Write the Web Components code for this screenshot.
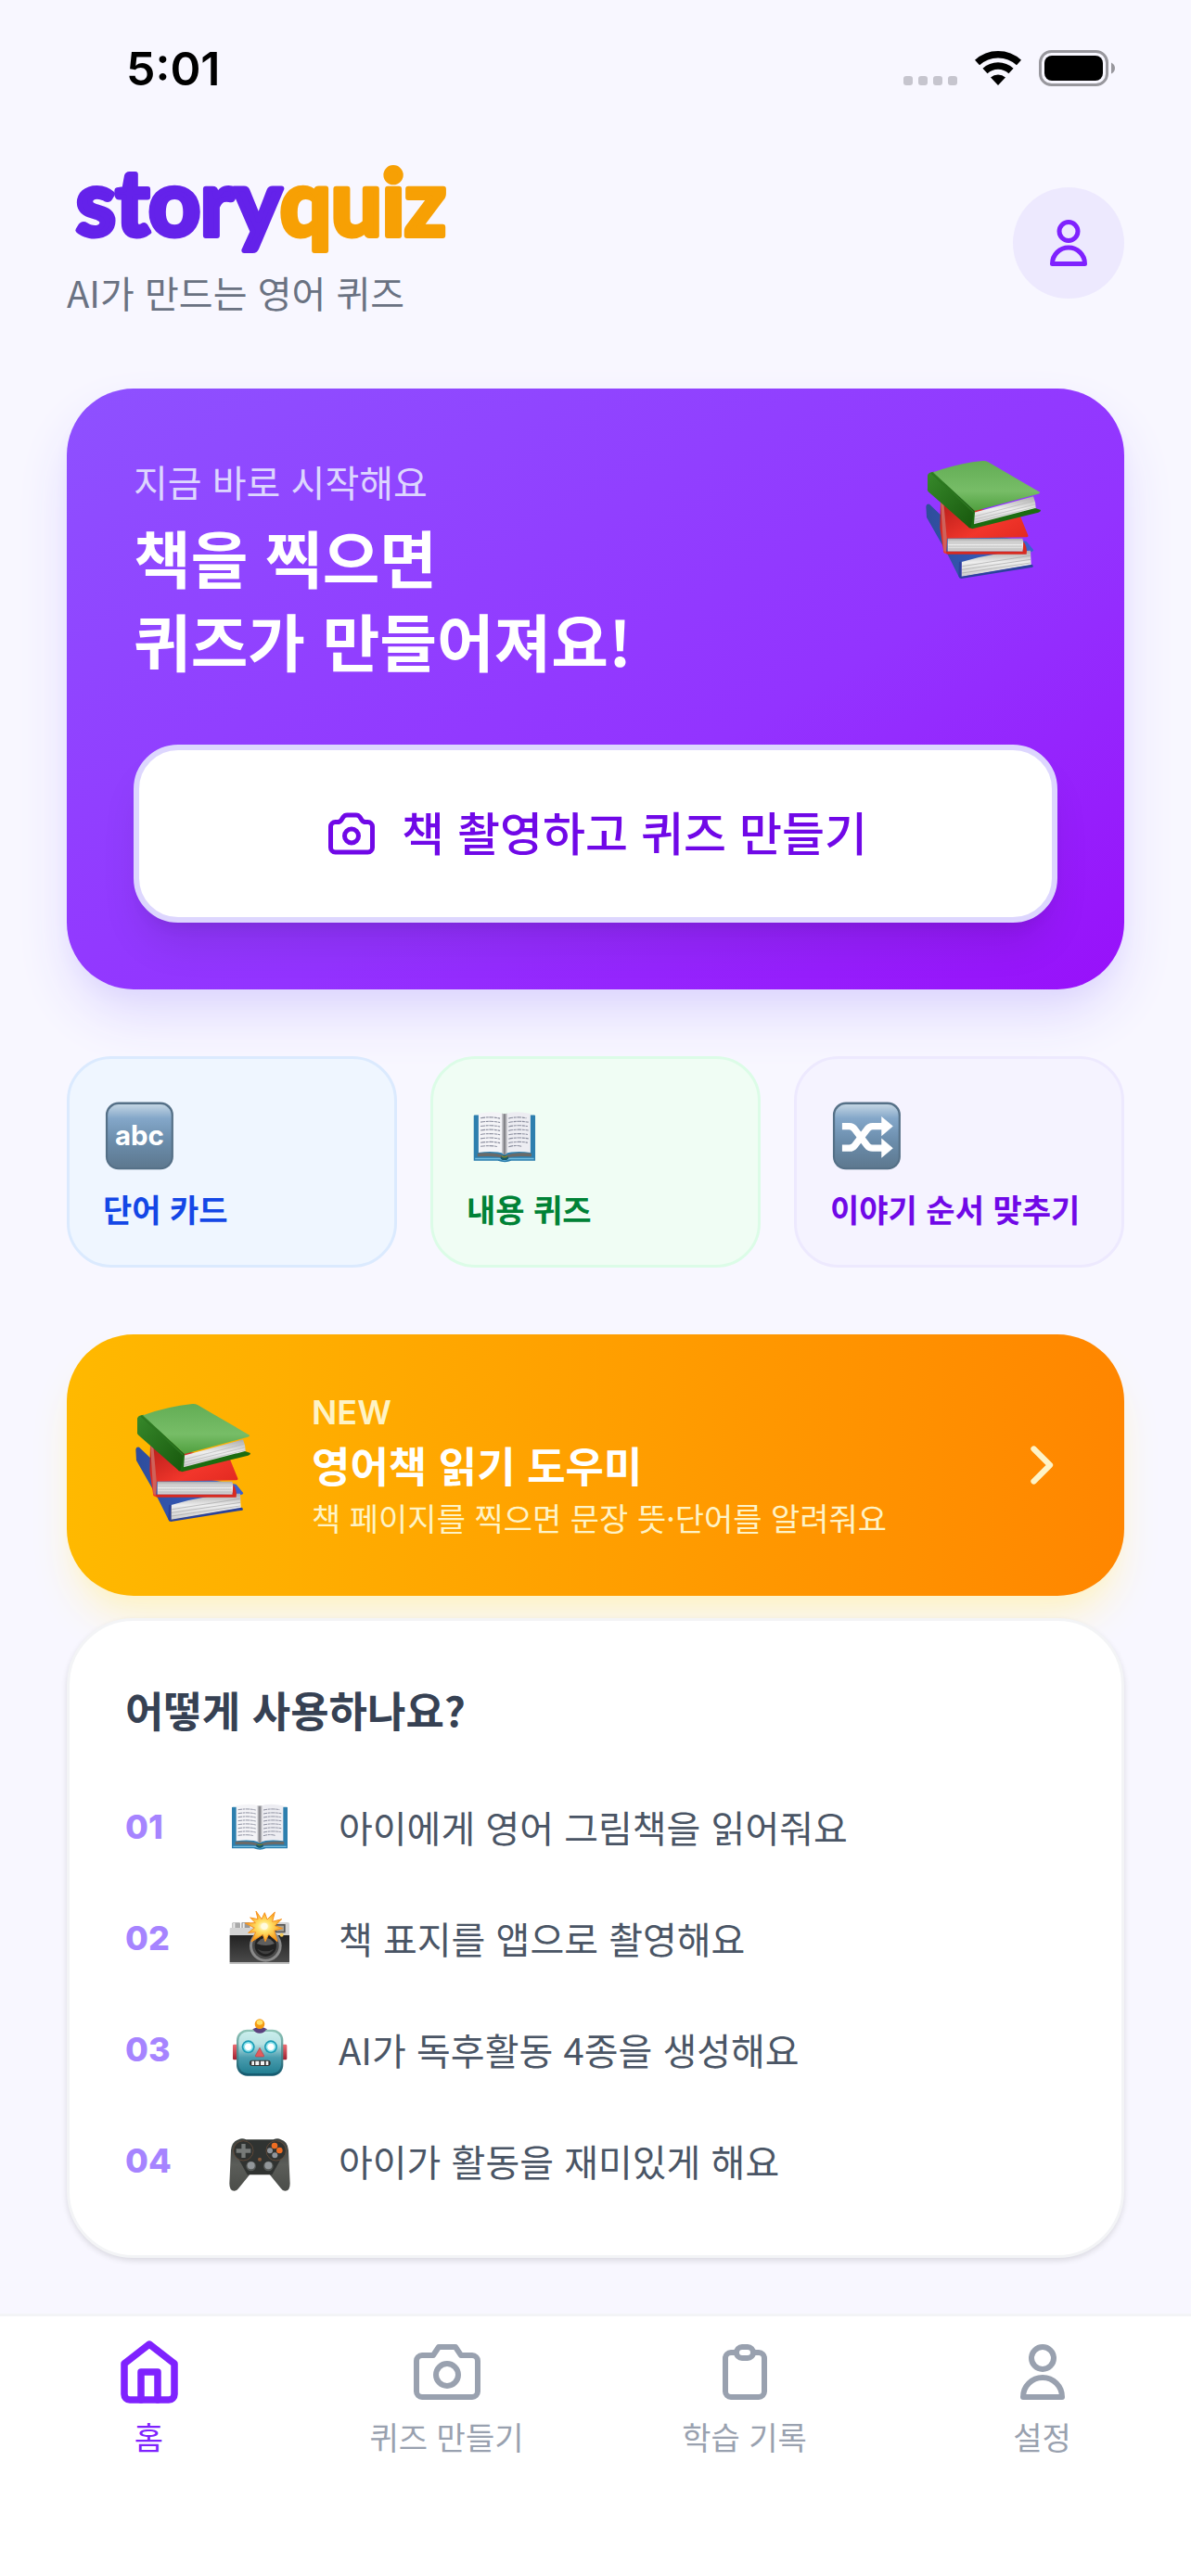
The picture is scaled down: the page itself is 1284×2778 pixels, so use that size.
<!DOCTYPE html>
<html lang="ko">
<head>
<meta charset="utf-8">
<meta name="viewport" content="width=device-width, initial-scale=1">
<title>storyquiz</title>
<style>
  html, body {
    margin: 0;
  }

  body {
    background: #f8f7ff;
    font-family: "Noto Sans CJK KR", "Noto Sans", sans-serif;
    color: #364153;
  }
</style>
</head>
<body>
<story-app>
  <status-bar slot="top" time="5:01"></status-bar>
  <app-header slot="top" tagline="AI가 만드는 영어 퀴즈"></app-header>

  <hero-card>
    <span slot="label">지금 바로 시작해요</span>
    <span slot="title">책을 찍으면<br>퀴즈가 만들어져요!</span>
    <span slot="action">책 촬영하고 퀴즈 만들기</span>
  </hero-card>

  <chip-row>
    <activity-chip tone="blue" emoji="abc">단어 카드</activity-chip>
    <activity-chip tone="green" emoji="book">내용 퀴즈</activity-chip>
    <activity-chip tone="violet" emoji="shuffle">이야기 순서 맞추기</activity-chip>
  </chip-row>

  <helper-banner>
    <span slot="badge">NEW</span>
    <span slot="title">영어책 읽기 도우미</span>
    <span slot="text">책 페이지를 찍으면 문장 뜻·단어를 알려줘요</span>
  </helper-banner>

  <how-to-card>
    <span slot="title">어떻게 사용하나요?</span>
    <how-to-step number="01" emoji="book">아이에게 영어 그림책을 읽어줘요</how-to-step>
    <how-to-step number="02" emoji="camera">책 표지를 앱으로 촬영해요</how-to-step>
    <how-to-step number="03" emoji="robot">AI가 독후활동 4종을 생성해요</how-to-step>
    <how-to-step number="04" emoji="gamepad">아이가 활동을 재미있게 해요</how-to-step>
  </how-to-card>

  <tab-bar slot="bottom">
    <tab-item icon="home" href="#home" active>홈</tab-item>
    <tab-item icon="camera" href="#create">퀴즈 만들기</tab-item>
    <tab-item icon="clipboard" href="#history">학습 기록</tab-item>
    <tab-item icon="user" href="#settings">설정</tab-item>
  </tab-bar>
</story-app>

<script>
const ICONS = {
  home: '<path d="M3 9l9-7 9 7v11a2 2 0 0 1-2 2H5a2 2 0 0 1-2-2z"/><path d="M9 22V12h6v10"/>',
  camera: '<path d="M23 19a2 2 0 0 1-2 2H3a2 2 0 0 1-2-2V8a2 2 0 0 1 2-2h4l2-3h6l2 3h4a2 2 0 0 1 2 2z"/><circle cx="12" cy="13" r="4"/>',
  photo: '<path d="M3 9a2 2 0 012-2h.93a2 2 0 001.664-.89l.812-1.22A2 2 0 0110.07 4h3.86a2 2 0 011.664.89l.812 1.22A2 2 0 0018.07 7H19a2 2 0 012 2v9a2 2 0 01-2 2H5a2 2 0 01-2-2V9z"/><circle cx="12" cy="13" r="3"/>',
  clipboard: '<path d="M9 5H7a2 2 0 00-2 2v12a2 2 0 002 2h10a2 2 0 002-2V7a2 2 0 00-2-2h-2M9 5a2 2 0 002 2h2a2 2 0 002-2M9 5a2 2 0 012-2h2a2 2 0 012 2"/>',
  user: '<circle cx="12" cy="7" r="4"/><path d="M12 14a7 7 0 00-7 7h14a7 7 0 00-7-7z"/>',
  chevron: '<path d="M9 5l7 7-7 7"/>'
};

// Shared gradient for the blue-grey square emoji
const TILE = `
  <defs>
    <linearGradient id="tile" x2="0" y2="1">
      <stop offset="0" stop-color="#c3d5e3"/><stop offset=".22" stop-color="#84a7c9"/>
      <stop offset=".55" stop-color="#6d8fae"/><stop offset="1" stop-color="#5d788f"/>
    </linearGradient>
  </defs>
  <rect x="8" y="12" width="198" height="198" rx="38" fill="#557087"/>
  <rect x="14" y="19" width="186" height="185" rx="32" fill="url(#tile)"/>`;

const EMOJI = {
  books: {
    box: '168 93 432 432',
    art: `
      <defs>
        <linearGradient id="page" x2="0" y2="1"><stop offset="0" stop-color="#aaa"/><stop offset=".45" stop-color="#eee"/><stop offset="1" stop-color="#ccc"/></linearGradient>
        <linearGradient id="green" x2="0" y2="1"><stop offset="0" stop-color="#63ad55"/><stop offset=".6" stop-color="#77bd67"/><stop offset="1" stop-color="#4f9f3e"/></linearGradient>
        <linearGradient id="spine" x2="1" y2="1"><stop offset="0" stop-color="#37892b"/><stop offset="1" stop-color="#17570c"/></linearGradient>
        <linearGradient id="red" x2="1" y2="1"><stop offset="0" stop-color="#b51d1a"/><stop offset=".5" stop-color="#f2362b"/><stop offset="1" stop-color="#dc241c"/></linearGradient>
        <linearGradient id="blue" x2="1" y2="0"><stop offset="0" stop-color="#2e4d9b"/><stop offset="1" stop-color="#3b62cf"/></linearGradient>
      </defs>
      <path d="M175 258q2-9 11-7l84 80 230 40 22 27q2 3-3 6L290 440l-6 52-40-80-67-118z" fill="url(#blue)"/>
      <path d="M290 438q110-34 223-37l2 47-226 38z" fill="url(#page)"/>
      <path d="M292 452l220-34M291 463l222-33M291 474l222-33" stroke="#a5a5a5" stroke-width="2" fill="none"/>
      <path d="M282 437l8 1v47l228-39q6 4 2 9L288 492q-6-2-8-9z" fill="#2a429b"/>
      <path d="M222 244l258 46 25 62q2 5-4 6l-258 4-3 50-8-4-12-80z" fill="url(#red)"/>
      <path d="M222 244l10 2 10 114-2 50-8-10z" fill="#cf625a"/>
      <path d="M245 362h242q7 20 0 42H245z" fill="url(#page)"/>
      <path d="M247 378h238M247 387h238M247 396h238" stroke="#aaa" stroke-width="2"/>
      <path d="M238 404h250l2-32q14 18 10 41H242z" fill="#d82a20"/>
      <path d="M180 158q2-10 20-12l133 126-12 56q-6 2-10-4L184 212q-6-4-4-10z" fill="url(#spine)"/>
      <path d="M198 148q80-29 160-37 10-1 18 4l167 97q2 4-6 6L333 273z" fill="url(#green)"/>
      <path d="M192 150l136 126" stroke="#2c7620" stroke-width="4" fill="none"/>
      <path d="M330 278l192-52q8 18 8 40l-202 52z" fill="url(#page)"/>
      <path d="M331 291l193-50M330 301l198-49M330 310l200-50" stroke="#b5b5b5" stroke-width="2" fill="none"/>
      <path d="M330 274l3 4-3 38 198-52 18 6q0 6-8 8l-214 53q-6-2-4-8z" fill="#1b6c10"/>`
  },
  book: {
    box: '69 0 228 228',
    art: `
      <path d="M90 52q0-2 3-2h174q3 0 3 2v132h-70q-18 8-40 0H90z" fill="#2d7fae"/>
      <path d="M94 176h72q14 12 28 0h72v4h-72q-14 8-28 0H94z" fill="#75bddf"/>
      <path d="M101 162q52-4 79 8 27-12 79-8v10q-50-4-72 4h-14q-22-8-72-4z" fill="#6a6a68"/>
      <path d="M104 46q48-10 76 2v116q-28-10-76-4z" fill="#f4f4f7"/>
      <path d="M256 46q-48-10-76 2v116q28-10 76-4z" fill="#ededf2"/>
      <path d="M173 45l7 3 7-3v118l-7 4-7-4z" fill="#b0b0b4"/>
      <path d="M180 46v120" stroke="#66666c" stroke-width="3"/>
      <path d="M110 59q32-5 57 1M110 71q32-5 57 1M110 83q32-5 57 1M110 95q32-5 57 1M110 107q32-5 57 1M110 119q32-5 57 1M110 131q32-5 57 1M110 142q32-4 50 1M192 60q26-6 52-1M192 72q26-6 58-1M192 84q26-6 56-1M192 96q26-6 58-1M192 108q26-6 56-1M192 120q26-6 58-1M192 132q26-6 56-1M192 143q20-6 38-1" stroke="#8b8e9e" stroke-width="3" stroke-dasharray="13 2 8 2" fill="none"/>
      <ellipse cx="180" cy="175" rx="11" ry="7" fill="#175a6b"/>
      <path d="M172 170q8 6 16 0" stroke="#85862f" stroke-width="4" fill="none"/>`
  },
  camera: {
    box: '69 0 228 228',
    art: `
      <defs>
        <linearGradient id="body" x2="0" y2="1"><stop offset="0" stop-color="#222"/><stop offset="1" stop-color="#4a4a4a"/></linearGradient>
        <radialGradient id="flash"><stop offset="0" stop-color="#fff"/><stop offset=".35" stop-color="#ffe36b"/><stop offset="1" stop-color="#f99a18"/></radialGradient>
      </defs>
      <rect x="91" y="64" width="26" height="24" rx="3" fill="#aaa"/>
      <rect x="121" y="63" width="28" height="24" rx="3" fill="#999"/>
      <path d="M97 65v16M128 65v16" stroke="#eee" stroke-width="6"/>
      <path d="M83 84q0-3 4-3h66V66q0-3 4-3h114q5 0 5 5v130H83z" fill="#d4d4d4"/>
      <path d="M83 105h193v87H83z" fill="url(#body)"/>
      <path d="M83 192h193v6H83z" fill="#bdbdbd"/>
      <rect x="229" y="69" width="34" height="28" fill="#555"/>
      <rect x="234" y="74" width="24" height="18" fill="#a7a295"/>
      <circle cx="199" cy="139" r="52" fill="#8a8a8a"/>
      <circle cx="199" cy="139" r="43" fill="#4a4a4a"/>
      <circle cx="199" cy="139" r="35" fill="#222"/>
      <path d="M170 132q29-38 58 0-29 12-58 0z" fill="#5e5e5e"/>
      <path d="M172 149q27 16 54 0-27 34-54 0z" fill="#404040"/>
      <circle cx="251" cy="104" r="6" fill="#f5ca57"/>
      <path d="M168 27l18 26 10-21 8 22 25-24-8 31 30-8-22 21 25 9-27 7 10 35-28-23-11 23-8-22-37 23 14-31-24 2 20-16-30-15 33-1-17-17 25 5z" fill="url(#flash)" stroke="#f7931e" stroke-width="3"/>
      <circle cx="195" cy="76" r="11" fill="#fffbe0"/>`
  },
  robot: {
    box: '69 0 228 228',
    art: `
      <defs>
        <linearGradient id="face" x2="0" y2="1"><stop offset="0" stop-color="#c9eeec"/><stop offset=".3" stop-color="#b8e1e2"/><stop offset=".62" stop-color="#4a9daf"/><stop offset="1" stop-color="#237f92"/></linearGradient>
        <linearGradient id="rim" x2="0" y2="1"><stop offset="0" stop-color="#93c7b9"/><stop offset="1" stop-color="#11586e"/></linearGradient>
        <linearGradient id="ear" x2="0" y2="1"><stop offset="0" stop-color="#ee6f75"/><stop offset="1" stop-color="#9f1f2e"/></linearGradient>
      </defs>
      <rect x="93" y="98" width="20" height="50" rx="4" fill="url(#ear)"/>
      <rect x="248" y="98" width="20" height="50" rx="4" fill="url(#ear)"/>
      <path d="M157 49q24-14 47 0-6 14-24 14t-23-14z" fill="#5b427f"/>
      <rect x="105" y="50" width="151" height="150" rx="35" fill="url(#rim)"/>
      <rect x="112" y="57" width="137" height="135" rx="29" fill="url(#face)"/>
      <path d="M159 50q21-8 42 0-7 12-21 12t-21-12z" fill="#5b427f"/>
      <circle cx="180" cy="32" r="16" fill="#f49b13"/>
      <ellipse cx="180" cy="27" rx="10" ry="8" fill="#ffe067"/>
      <circle cx="143" cy="106" r="21" fill="#1b9cb5"/>
      <circle cx="143" cy="106" r="16" fill="#8ee4ee"/>
      <circle cx="143" cy="106" r="11" fill="#fff"/>
      <circle cx="216" cy="106" r="21" fill="#1b9cb5"/>
      <circle cx="216" cy="106" r="16" fill="#8ee4ee"/>
      <circle cx="216" cy="106" r="11" fill="#fff"/>
      <path d="M180 109l14 26q0 3-3 3h-22q-3 0-3-3z" fill="#e25c5d" stroke="#b34148" stroke-width="2"/>
      <rect x="147" y="149" width="68" height="19" rx="9" fill="#333"/>
      <path d="M154 152h8v13h-8zM166 152h12v13h-12zM183 152h12v13h-12zM200 152h8v13h-8z" fill="#f4f4f4"/>`
  },
  gamepad: {
    box: '69 0 228 228',
    art: `
      <defs><linearGradient id="pad" x2="0" y2="1"><stop offset="0" stop-color="#3c403d"/><stop offset=".5" stop-color="#5b5d59"/><stop offset="1" stop-color="#4b4d49"/></linearGradient></defs>
      <path d="M112 46q10-6 24 0h88q14-6 24 0 22 6 25 34l5 108q0 24-16 24-8 0-14-9l-36-44h-64l-36 44q-6 9-14 9-16 0-16-24l5-108q3-28 25-34z" fill="url(#pad)"/>
      <path d="M122 48h116l16 50-34 62h-80l-34-62z" fill="#303331"/>
      <circle cx="127" cy="82" r="32" fill="#303331" stroke="#75533c" stroke-width="2"/>
      <circle cx="233" cy="82" r="32" fill="#303331" stroke="#75533c" stroke-width="2"/>
      <path d="M121 60h13v16h17v13h-17v16h-13V89h-17V76h17z" fill="#777b79"/>
      <circle cx="228" cy="66" r="10" fill="#ef6d22"/>
      <circle cx="244" cy="81" r="10" fill="#ef6d22"/>
      <circle cx="229" cy="97" r="9" fill="#90959b"/>
      <circle cx="213" cy="82" r="9" fill="#90959b"/>
      <circle cx="180" cy="110" r="6" fill="#8a5a3a"/>
      <circle cx="152" cy="132" r="16" fill="#555957"/>
      <circle cx="152" cy="130" r="12" fill="#92979a"/>
      <circle cx="208" cy="132" r="16" fill="#555957"/>
      <circle cx="208" cy="130" r="12" fill="#92979a"/>`
  },
  abc: {
    box: '0 0 228 228',
    art: `${TILE}<text x="107" y="139" text-anchor="middle" font-family="Inter, sans-serif" font-weight="700" font-size="80" fill="#fff">abc</text>`
  },
  shuffle: {
    box: '0 0 228 228',
    art: `${TILE}
      <g fill="none" stroke="#fff" stroke-width="20">
        <path d="M35 83h21q10 0 16 9l36 47q6 8 16 8h28"/>
        <path d="M35 147h21q10 0 16-8l36-47q6-9 16-9h28"/>
      </g>
      <path d="M150 54l34 29-34 29zM150 118l34 29-34 29z" fill="#fff"/>`
  }
};

class SqIcon extends HTMLElement {
  constructor() {
    super();
    this.attachShadow({ mode: 'open' });
  }

  connectedCallback() {
    const name = this.getAttribute('name');
    const weight = this.getAttribute('weight') || '2';
    this.shadowRoot.innerHTML = `
      <style>
        :host { display: block; flex: none; width: var(--icon-size, 60px); height: var(--icon-size, 60px); }
        svg { display: block; width: 100%; height: 100%; }
      </style>
      <svg viewBox="0 0 24 24" fill="none" stroke="currentColor" stroke-width="${weight}"
        stroke-linecap="round" stroke-linejoin="round" aria-hidden="true">${ICONS[name]}</svg>
    `;
  }
}

class SqEmoji extends HTMLElement {
  constructor() {
    super();
    this.attachShadow({ mode: 'open' });
  }

  connectedCallback() {
    const emoji = EMOJI[this.getAttribute('name')];
    this.shadowRoot.innerHTML = `
      <style>
        :host { display: block; flex: none; width: var(--emoji-size, 76px); height: var(--emoji-size, 76px); }
        svg { display: block; width: 100%; height: 100%; }
      </style>
      <svg viewBox="${emoji.box}" aria-hidden="true">${emoji.art}</svg>
    `;
  }
}

class StoryApp extends HTMLElement {
  constructor() {
    super();
    this.attachShadow({ mode: 'open' });
    this.shadowRoot.innerHTML = `
      <style>
        :host { display: flex; flex-direction: column; min-height: 100vh; }
        main { flex: 1; padding: 72px 72px 60px; }
        footer { position: sticky; bottom: 0; }
      </style>
      <slot name="top"></slot>
      <main><slot></slot></main>
      <footer><slot name="bottom"></slot></footer>
    `;
  }
}

class StatusBar extends HTMLElement {
  constructor() {
    super();
    this.attachShadow({ mode: 'open' });
  }

  connectedCallback() {
    this.shadowRoot.innerHTML = `
      <style>
        :host {
          display: flex;
          align-items: center;
          justify-content: space-between;
          height: 147px;
          padding: 0 82px 0 136px;
          color: #000;
          font: 600 50px/60px Inter, sans-serif;
        }
        .signals { display: flex; align-items: flex-end; gap: 19px; }
        svg { display: block; }
      </style>
      <span>${this.getAttribute('time')}</span>
      <div class="signals">
        <svg width="58" height="11" viewBox="0 0 58 11" fill="#c6c5ce">
          <rect width="10" height="10" rx="3"/><rect x="16" width="10" height="10" rx="3"/>
          <rect x="32" width="10" height="10" rx="3"/><rect x="48" width="10" height="10" rx="3"/>
        </svg>
        <svg width="50" height="39" viewBox="0 0 50 39">
          <path d="M2.5 13.5a33 33 0 0 1 45 0M11 22.500a20.500 20.500 0 0 1 28 0" fill="none" stroke="#000" stroke-width="7.500"/>
          <path d="M25 38l-8-8.500a12 12 0 0 1 16 0z"/>
        </svg>
        <svg width="82" height="39" viewBox="0 0 82 39">
          <rect x="1.500" y="1.500" width="72" height="36" rx="12" fill="none" stroke="#98979d" stroke-width="3"/>
          <rect x="6" y="6" width="63" height="27" rx="8"/>
          <path d="M78 13.500q4 2 4 6t-4 6z" fill="#98979d"/>
        </svg>
      </div>
    `;
  }
}

class AppHeader extends HTMLElement {
  constructor() {
    super();
    this.attachShadow({ mode: 'open' });
  }

  connectedCallback() {
    this.shadowRoot.innerHTML = `
      <style>
        :host { display: flex; align-items: center; justify-content: space-between; padding: 30px 72px 0; }
        h1 { margin: 0 0 4px; }
        h1 svg { display: block; overflow: visible; }
        p { margin: 0 0 2px; font-size: 40px; line-height: 60px; color: #6a7282; }
        button {
          display: flex;
          align-items: center;
          justify-content: center;
          width: 120px;
          height: 120px;
          padding: 0;
          border: 0;
          border-radius: 50%;
          background: #ede9fe;
          color: #7f22fe;
        }
      </style>
      <div>
        <h1>
          <svg width="420" height="104" viewBox="0 0 420 104">
            <text x="10" y="77" font-family="Lato, sans-serif" font-weight="700" font-size="97"
              stroke-width="6" stroke-linejoin="round"><tspan fill="#6422ea" stroke="#6422ea">story</tspan><tspan fill="#f7a004" stroke="#f7a004">quiz</tspan></text>
          </svg>
        </h1>
        <p>${this.getAttribute('tagline')}</p>
      </div>
      <button type="button" aria-label="내 정보"><sq-icon name="user"></sq-icon></button>
    `;
  }
}

class HeroCard extends HTMLElement {
  constructor() {
    super();
    this.attachShadow({ mode: 'open' });
    this.shadowRoot.innerHTML = `
      <style>
        :host {
          display: block;
          padding: 72px;
          border-radius: 72px;
          background: linear-gradient(to bottom right, #8e51ff, #9333ff 60%, #9810fa);
          box-shadow: 0 30px 60px -6px #ddd6fe, 0 12px 24px -12px #ddd6fe;
        }
        .intro { display: flex; justify-content: space-between; margin-bottom: 68px; }
        p { margin: 0 0 8px; font-size: 40px; line-height: 56px; color: #ddd6fe; }
        h2 { margin: 0; font-size: 67px; line-height: 90px; font-weight: 700; color: #fff; }
        sq-emoji { --emoji-size: 144px; }
        button {
          display: flex;
          align-items: center;
          justify-content: center;
          gap: 24px;
          box-sizing: border-box;
          width: 100%;
          padding: 51px 48px;
          border: 6px solid #ddd6fe;
          border-radius: 48px;
          background: #fff;
          box-shadow: 0 30px 45px -9px rgba(0, 0, 0, .1), 0 12px 18px -12px rgba(0, 0, 0, .1);
          color: #7008e7;
          font-family: inherit;
          font-size: 50px;
          line-height: 72px;
          font-weight: 500;
        }
        button span { padding-bottom: 6px; }
      </style>
      <div class="intro">
        <div>
          <p><slot name="label"></slot></p>
          <h2><slot name="title"></slot></h2>
        </div>
        <sq-emoji name="books"></sq-emoji>
      </div>
      <button type="button"><sq-icon name="photo"></sq-icon><span><slot name="action"></slot></span></button>
    `;
  }
}

class ChipRow extends HTMLElement {
  constructor() {
    super();
    this.attachShadow({ mode: 'open' });
    this.shadowRoot.innerHTML = `
      <style>
        :host { display: grid; grid-template-columns: repeat(3, 1fr); gap: 36px; margin: 72px 0; }
      </style>
      <slot></slot>
    `;
  }
}

class ActivityChip extends HTMLElement {
  constructor() {
    super();
    this.attachShadow({ mode: 'open' });
  }

  connectedCallback() {
    this.shadowRoot.innerHTML = `
      <style>
        :host { display: block; --bg: #eff6ff; --line: #dbeafe; --ink: #1447e6; }
        :host([tone="green"]) { --bg: #f0fdf4; --line: #dcfce7; --ink: #008236; }
        :host([tone="violet"]) { --bg: #f5f3ff; --line: #ede9fe; --ink: #7008e7; }
        button {
          display: block;
          width: 100%;
          padding: 36px;
          border: 3px solid var(--line);
          border-radius: 48px;
          background: var(--bg);
          color: var(--ink);
          font-family: inherit;
          font-size: 34px;
          line-height: 48px;
          font-weight: 700;
          text-align: left;
          white-space: nowrap;
        }
        sq-emoji { --emoji-size: 84px; margin: 6px 0 12px; }
      </style>
      <button type="button"><sq-emoji name="${this.getAttribute('emoji')}"></sq-emoji><slot></slot></button>
    `;
  }
}

class HelperBanner extends HTMLElement {
  constructor() {
    super();
    this.attachShadow({ mode: 'open' });
    this.shadowRoot.innerHTML = `
      <style>
        :host { display: block; margin-bottom: 24px; }
        a {
          display: flex;
          align-items: center;
          gap: 48px;
          padding: 60px 60px 60px 72px;
          border-radius: 72px;
          background: linear-gradient(90deg, #ffb900, #ff8600);
          box-shadow: 0 30px 45px -9px #fef3c6, 0 12px 18px -12px #fef3c6;
          color: #fef3c6;
          text-decoration: none;
        }
        sq-emoji { --emoji-size: 144px; }
        .copy { flex: 1; }
        .badge { font: 600 36px/48px Inter, sans-serif; }
        .title { font-size: 45px; line-height: 66px; font-weight: 700; color: #fff; }
        .text { font-size: 34px; line-height: 48px; }
      </style>
      <a href="#reader">
        <sq-emoji name="books"></sq-emoji>
        <div class="copy">
          <div class="badge"><slot name="badge"></slot></div>
          <div class="title"><slot name="title"></slot></div>
          <div class="text"><slot name="text"></slot></div>
        </div>
        <sq-icon name="chevron" weight="2.5"></sq-icon>
      </a>
    `;
  }
}

class HowToCard extends HTMLElement {
  constructor() {
    super();
    this.attachShadow({ mode: 'open' });
    this.shadowRoot.innerHTML = `
      <style>
        :host {
          display: block;
          position: relative;
          padding: 60px;
          border: 3px solid #f3f4f6;
          border-radius: 72px;
          background: #fff;
          box-shadow: 0 3px 6px rgba(0, 0, 0, .12);
        }
        h2 { margin: 0 0 48px; font-size: 45px; line-height: 72px; font-weight: 700; color: #364153; }
        .steps { display: grid; gap: 36px; }
      </style>
      <h2><slot name="title"></slot></h2>
      <div class="steps" role="list"><slot></slot></div>
    `;
  }
}

class HowToStep extends HTMLElement {
  constructor() {
    super();
    this.attachShadow({ mode: 'open' });
  }

  connectedCallback() {
    this.setAttribute('role', 'listitem');
    this.shadowRoot.innerHTML = `
      <style>
        :host { display: flex; align-items: center; gap: 46px; font-size: 40px; line-height: 84px; color: #4a5565; }
        .number { width: 62px; font-family: Inter, sans-serif; font-size: 36px; font-weight: 800; color: #a684ff; }
      </style>
      <span class="number">${this.getAttribute('number')}</span>
      <sq-emoji name="${this.getAttribute('emoji')}"></sq-emoji>
      <span><slot></slot></span>
    `;
  }
}

class TabBar extends HTMLElement {
  constructor() {
    super();
    this.attachShadow({ mode: 'open' });
    this.shadowRoot.innerHTML = `
      <style>
        :host { display: block; border-top: 3px solid #f3f4f6; background: #fff; }
        nav { display: grid; grid-template-columns: repeat(4, 1fr); padding: 24px 0 126px; }
      </style>
      <nav><slot></slot></nav>
    `;
  }
}

class TabItem extends HTMLElement {
  constructor() {
    super();
    this.attachShadow({ mode: 'open' });
  }

  connectedCallback() {
    const active = this.hasAttribute('active');
    this.shadowRoot.innerHTML = `
      <style>
        :host { display: block; color: #99a1af; }
        :host([active]) { color: #7f22fe; }
        a {
          display: flex;
          flex-direction: column;
          align-items: center;
          gap: 10px;
          color: inherit;
          font-size: 34px;
          line-height: 48px;
          text-decoration: none;
        }
        sq-icon { --icon-size: 72px; }
      </style>
      <a href="${this.getAttribute('href')}" ${active ? 'aria-current="page"' : ''}>
        <sq-icon name="${this.getAttribute('icon')}" weight="${active ? '2.5' : '2'}"></sq-icon>
        <span><slot></slot></span>
      </a>
    `;
  }
}

customElements.define('sq-icon', SqIcon);
customElements.define('sq-emoji', SqEmoji);
customElements.define('story-app', StoryApp);
customElements.define('status-bar', StatusBar);
customElements.define('app-header', AppHeader);
customElements.define('hero-card', HeroCard);
customElements.define('chip-row', ChipRow);
customElements.define('activity-chip', ActivityChip);
customElements.define('helper-banner', HelperBanner);
customElements.define('how-to-card', HowToCard);
customElements.define('how-to-step', HowToStep);
customElements.define('tab-bar', TabBar);
customElements.define('tab-item', TabItem);
</script>
</body>
</html>
